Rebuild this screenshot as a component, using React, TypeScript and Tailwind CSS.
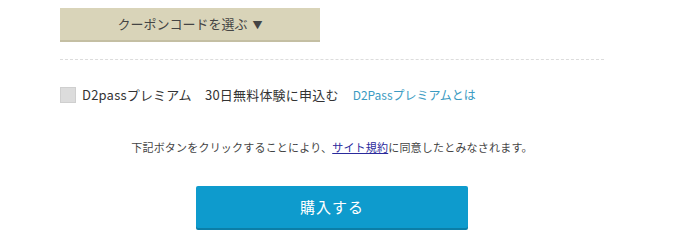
export default function App() {
  return (
    <div className="w-[679px] h-[240px] bg-white overflow-hidden font-['Noto_Sans_CJK_JP',sans-serif]">
      <div className="ml-[60px] w-[544px] pt-[8px]">
        <button className="w-[260px] h-[34px] bg-[#d9d4b9] border-b-2 border-[#c4bfa3] text-[13px] text-[#444] flex items-center justify-center">
          クーポンコードを選ぶ<span className="ml-[5px] text-[10px]">▼</span>
        </button>

        <div className="mt-[17px] border-t border-dashed border-[#dcdcdc]" />

        <div className="mt-[27px] flex items-center h-[16px]">
          <span className="w-[16px] h-[16px] bg-[#dcdcdc] border border-[#cfcfcf] shrink-0" />
          <span className="ml-[6px] text-[13px] text-[#333] whitespace-nowrap tracking-[0.2px]">
            D2passプレミアム　30日無料体験に申込む
          </span>
          <a className="ml-[14px] text-[12px] text-[#3b9bc2] whitespace-nowrap">D2Passプレミアムとは</a>
        </div>

        <p className="mt-[36px] text-center text-[11px] text-[#444] leading-[16px] tracking-[0.2px]">
          下記ボタンをクリックすることにより、
          <a className="text-[#2a2a9c] underline">サイト規約</a>
          に同意したとみなされます。
        </p>

        <div className="mt-[31px] flex justify-center">
          <button className="w-[272px] h-[42px] bg-[#0e9bcd] rounded-[2px] shadow-[0_2px_0_#0b7ea7] text-white text-[15px] tracking-[1px]">
            購入する
          </button>
        </div>
      </div>
    </div>
  );
}
